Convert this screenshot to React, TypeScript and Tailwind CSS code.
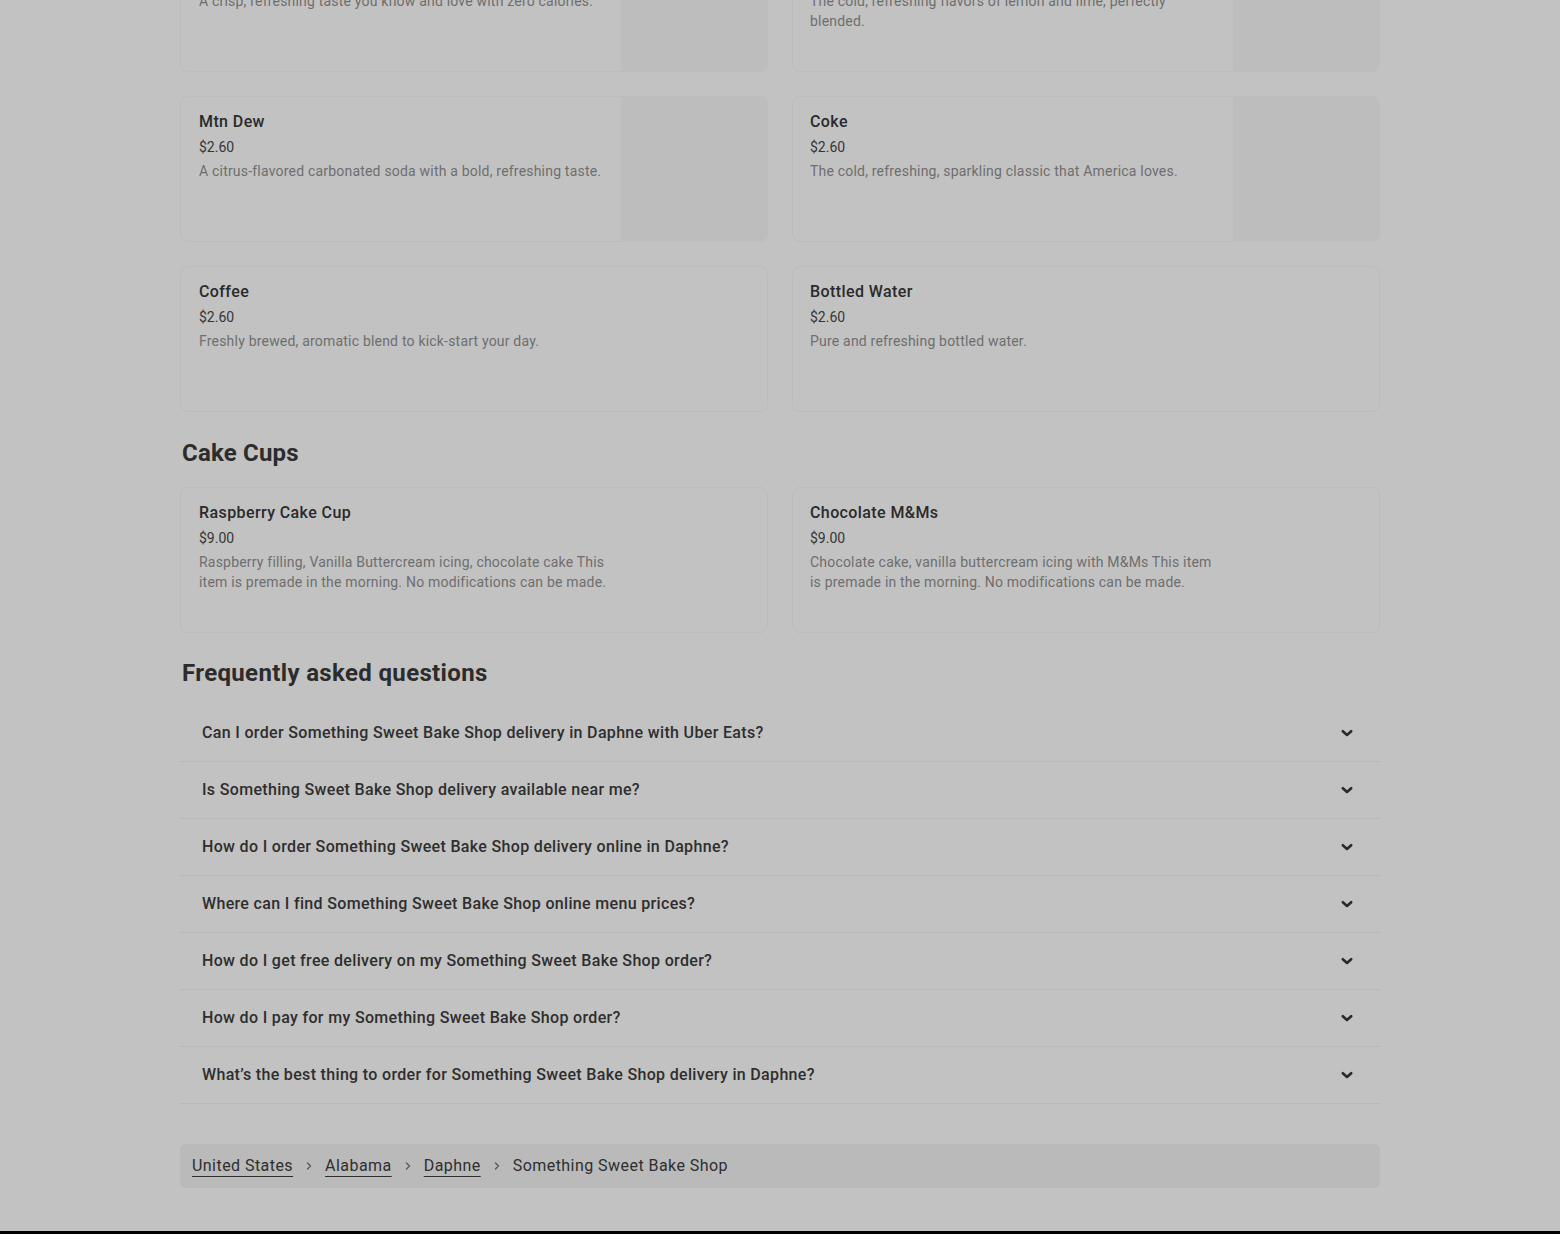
import React from "react";

type Item = { name: string; price: string; desc: string; img?: boolean };

const drinks: Item[] = [
  { name: "Diet Coke", price: "$2.60", desc: "A crisp, refreshing taste you know and love with zero calories.", img: true },
  { name: "Sprite", price: "$2.60", desc: "The cold, refreshing flavors of lemon and lime, perfectly blended.", img: true },
  { name: "Mtn Dew", price: "$2.60", desc: "A citrus-flavored carbonated soda with a bold, refreshing taste.", img: true },
  { name: "Coke", price: "$2.60", desc: "The cold, refreshing, sparkling classic that America loves.", img: true },
  { name: "Coffee", price: "$2.60", desc: "Freshly brewed, aromatic blend to kick-start your day." },
  { name: "Bottled Water", price: "$2.60", desc: "Pure and refreshing bottled water." },
];

const cakes: Item[] = [
  { name: "Raspberry Cake Cup", price: "$9.00", desc: "Raspberry filling, Vanilla Buttercream icing, chocolate cake This item is premade in the morning. No modifications can be made." },
  { name: "Chocolate M&Ms", price: "$9.00", desc: "Chocolate cake, vanilla buttercream icing with M&Ms This item is premade in the morning. No modifications can be made." },
];

const faqs = [
  "Can I order Something Sweet Bake Shop delivery in Daphne with Uber Eats?",
  "Is Something Sweet Bake Shop delivery available near me?",
  "How do I order Something Sweet Bake Shop delivery online in Daphne?",
  "Where can I find Something Sweet Bake Shop online menu prices?",
  "How do I get free delivery on my Something Sweet Bake Shop order?",
  "How do I pay for my Something Sweet Bake Shop order?",
  "What\u2019s the best thing to order for Something Sweet Bake Shop delivery in Daphne?",
];

function Card({ item, right }: { item: Item; right?: boolean }) {
  return (
    <div className="flex h-[146px] rounded-lg border border-[#bcbcbc] overflow-hidden">
      <div className={right ? "flex-1 pl-[17px] pr-4 pt-[13px]" : "flex-1 pl-[18px] pr-4 pt-[13px]"}>
        <div className="text-[16px] leading-[24px] font-medium text-[#2a2a2a] tracking-[0.4px]">{item.name}</div>
        <div className="mt-[3px] text-[14px] leading-[20px] text-[#363636]">{item.price}</div>
        <div className="mt-[4px] max-w-[414px] text-[14px] leading-[20px] text-[#6e6e6e] tracking-[0.2px]">{item.desc}</div>
      </div>
      {item.img && <div className="w-[146px] h-full bg-[#bdbdbd] rounded-r-lg" />}
    </div>
  );
}

function Chevron() {
  return (
    <svg width="14" height="14" viewBox="0 0 14 14" fill="none">
      <path d="M2.8 5.2 L7 9 L11.2 5.2" stroke="#2a2a2a" strokeWidth="2.6" strokeLinecap="round" strokeLinejoin="round" />
    </svg>
  );
}

function Sep() {
  return (
    <svg width="8" height="10" viewBox="0 0 8 10" fill="none" className="mx-[12px]">
      <path d="M2.5 2 L5.5 5 L2.5 8" stroke="#5a5a5a" strokeWidth="1.4" strokeLinecap="round" strokeLinejoin="round" />
    </svg>
  );
}

export default function App() {
  return (
    <div className="min-h-[1234px] w-full bg-[#c2c2c2] overflow-hidden flex flex-col" style={{ fontFamily: "Roboto, 'Noto Sans', sans-serif" }}>
      <div className="w-[1200px] mx-auto flex-1">
        <div className="-mt-[74px] grid grid-cols-2 gap-x-6 gap-y-6">
          {drinks.map((d, i) => (
            <Card key={d.name} item={d} right={i % 2 === 1} />
          ))}
        </div>

        <h2 className="mt-[25px] pl-[2px] text-[24px] leading-[32px] font-bold text-[#2c2c2c] tracking-[0.2px]">Cake Cups</h2>
        <div className="mt-[18px] grid grid-cols-2 gap-x-6">
          {cakes.map((d, i) => (
            <Card key={d.name} item={d} right={i % 2 === 1} />
          ))}
        </div>

        <h2 className="mt-[24px] pl-[2px] text-[24px] leading-[32px] font-bold text-[#2c2c2c] tracking-[0.35px]">Frequently asked questions</h2>
        <div className="mt-[16px]">
          {faqs.map((q) => (
            <div key={q} className="h-[57px] flex items-center justify-between border-b border-[#b9b9b9] pl-[22px] pr-[26px]">
              <span className="text-[16px] font-medium text-[#2e2e2e] tracking-[0.33px]">{q}</span>
              <Chevron />
            </div>
          ))}
        </div>

        <div className="mt-[40px] h-[44px] rounded-md bg-[#bababa] flex items-center px-3 text-[16px] text-[#2e2e2e] tracking-[0.45px]">
          <a className="underline underline-offset-[5px] decoration-1">United States</a>
          <Sep />
          <a className="underline underline-offset-[5px] decoration-1">Alabama</a>
          <Sep />
          <a className="underline underline-offset-[5px] decoration-1">Daphne</a>
          <Sep />
          <span>Something Sweet Bake Shop</span>
        </div>
      </div>
      <div className="mt-[43px] h-[4px] bg-black w-full" />
    </div>
  );
}
